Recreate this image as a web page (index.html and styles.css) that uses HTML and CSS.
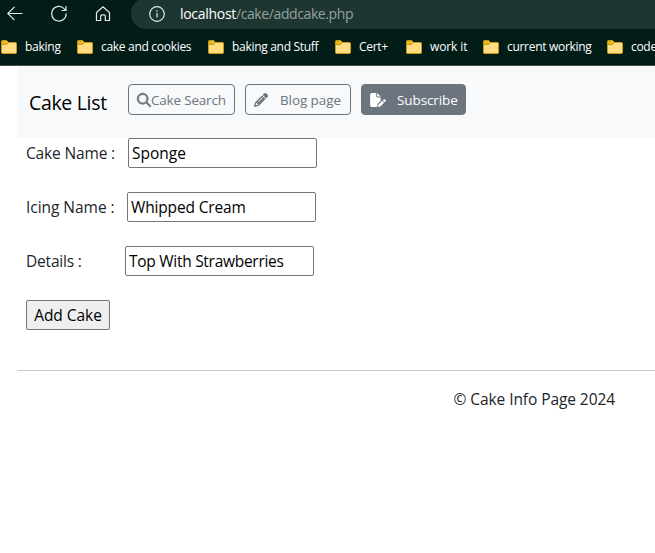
FILE: index.html
```html
<!DOCTYPE html>
<html lang="en">
<head>
<meta charset="utf-8">
<title>Cake List</title>
<link rel="stylesheet" href="styles.css">
</head>
<body>
<svg class="defs" width="0" height="0">
  <symbol id="folder" viewBox="0 0 16 14">
    <path d="M.5 1.5Q.5.5 1.5.5H5.5L7.5 2.5H14.5Q15.5 2.5 15.5 3.5V12.500Q15.500 13.500 14.500 13.500H1.500Q.500 13.500.500 12.500Z" fill="#ffdc82" stroke="#c99a10"/>
    <path d="M1 1H5.500L7 2.500 5.500 4H1Z" fill="#e5b61f"/>
    <path d="M.500 4.500H5.500L7.500 2.500" fill="none" stroke="#c99a10"/>
  </symbol>
</svg>
<header class="browser">
  <div class="toolbar">
    <div class="tools">
      <svg width="16" height="16" viewBox="0 0 16 16"><path d="M15.500 7.500H.800M7.500.800.800 7.500l6.700 6.700"/></svg>
      <svg width="18" height="18" viewBox="0 0 18 18"><path d="M16.200 8.500A7.300 7.300 0 1 1 14.300 3.800L16 5.500M16 1V5.500H11.500"/></svg>
      <svg width="16" height="18" viewBox="0 0 16 18"><path d="M1.500 7.500 8 1.700l6.500 5.800V15.500H10.300V11Q10.300 9.800 9 9.800H7Q5.700 9.800 5.700 11V15.500H1.500Z"/></svg>
    </div>
    <div class="address">
      <svg width="16" height="16" viewBox="0 0 16 16"><circle cx="8" cy="8" r="7.300"/><path d="M8 7v4.500M8 4.300v1.400"/></svg>
      <span class="url"><b>localhost</b>/cake/addcake.php</span>
    </div>
  </div>
  <nav class="bookmarks">
    <a class="bm w76"><svg><use href="#folder"/></svg><span>baking</span></a>
    <a class="bm w131"><svg><use href="#folder"/></svg><span>cake and cookies</span></a>
    <a class="bm w127"><svg><use href="#folder"/></svg><span>baking and Stuff</span></a>
    <a class="bm w71"><svg><use href="#folder"/></svg><span>Cert+</span></a>
    <a class="bm w77 wide"><svg><use href="#folder"/></svg><span>work it</span></a>
    <a class="bm w124"><svg><use href="#folder"/></svg><span>current working</span></a>
    <a class="bm"><svg><use href="#folder"/></svg><span>code</span></a>
  </nav>
</header>
<main class="page">
  <nav class="navbar">
    <span class="brand">Cake List</span>
    <a class="btn search"><svg width="14" height="14" viewBox="0 0 512 512"><path d="M416 208c0 45.900-14.900 88.300-40 122.700L502.600 457.400c12.500 12.500 12.500 32.800 0 45.300s-32.800 12.500-45.300 0L330.700 376c-34.400 25.200-76.800 40-122.700 40C93.100 416 0 322.900 0 208S93.100 0 208 0S416 93.100 416 208zM208 352a144 144 0 1 0 0-288 144 144 0 1 0 0 288z"/></svg><span>Cake Search</span></a>
    <a class="btn blog"><svg width="14" height="14" viewBox="0 0 512 512"><path d="M410.300 231l11.300-11.300-33.900-33.900-62.100-62.100L291.700 89.800l-11.300 11.300-22.600 22.600L58.600 322.900c-10.400 10.400-18 23.300-22.200 37.400L1 480.700c-2.500 8.400-.2 17.500 6.100 23.700s15.300 8.500 23.700 6.100l120.300-35.400c14.100-4.200 27-11.800 37.400-22.200L387.700 253.700 410.300 231zM160 399.400l-9.100 22.700c-4 3.100-8.500 5.400-13.300 6.900L59.400 452l23-78.100c1.400-4.900 3.800-9.400 6.900-13.300l22.700-9.100v32c0 8.800 7.200 16 16 16h32zM362.700 18.700L348.300 33.200 325.700 55.800 314.300 67.100l33.900 33.900 62.100 62.100 33.900 33.900 11.300-11.300 22.600-22.600 14.500-14.500c25-25 25-65.500 0-90.500L453.300 18.700c-25-25-65.500-25-90.500 0zm-47.400 168l-144 144c-6.200 6.200-16.400 6.200-22.600 0s-6.200-16.400 0-22.600l144-144c6.200-6.200 16.400-6.200 22.600 0s6.200 16.400 0 22.600z"/></svg><span>Blog page</span></a>
    <a class="btn subscribe"><svg width="16" height="14" viewBox="0 0 576 512"><path d="M0 64C0 28.700 28.700 0 64 0H224V128c0 17.700 14.300 32 32 32H384V285.700l-86.800 86.800c-10.300 10.300-17.500 23.100-21 37.200l-18.700 74.900c-2.300 9.200-1.800 18.800 1.300 27.500H64c-35.300 0-64-28.700-64-64V64zm384 64H256V0L384 128zM549.800 235.700l14.400 14.400c15.600 15.600 15.600 40.900 0 56.600l-29.400 29.400-71-71 29.400-29.400c15.600-15.600 40.900-15.600 56.600 0zM311.900 417L441.100 287.800l71 71L382.900 487.900c-4.100 4.100-9.200 7-14.900 8.400l-60.100 15c-5.500 1.400-11.200-.2-15.200-4.200s-5.600-9.700-4.200-15.200l15-60.100c1.400-5.600 4.300-10.800 8.400-14.900z"/></svg><span>Subscribe</span></a>
  </nav>
  <form class="form">
    <div class="row"><label class="l1">Cake Name :</label><input class="i1" value="Sponge"></div>
    <div class="row"><label class="l2">Icing Name :</label><input class="i2" value="Whipped Cream"></div>
    <div class="row"><label class="l3">Details :</label><input class="i3" value="Top With Strawberries"></div>
    <button type="button" class="add">Add Cake</button>
  </form>
  <footer class="footer"><span>© Cake Info Page 2024</span></footer>
</main>
</body>
</html>
```
FILE: styles.css
```css
* { box-sizing: border-box; }
body { margin: 0; height: 553px; overflow: hidden; background: #fff; color: #212529; font: 15.500px/24px "Open Sans", "Noto Sans", sans-serif; white-space: nowrap; }
svg { display: block; flex: none; }
.defs { position: absolute; }
.browser { height: 66px; background: #021d18; border-bottom: 1px solid #3d4f4b; overflow: hidden; }
.toolbar { display: flex; height: 29px; }
.tools { display: flex; width: 131px; padding: 0 20px 1px 7px; justify-content: space-between; align-items: center; }
.toolbar svg { fill: none; stroke: #e4e9e7; stroke-width: 1.200; }
.address { flex: 1; display: flex; align-items: center; gap: 15px; margin-top: -2px; padding-left: 18px; background: #1d3631; border-radius: 16px 0 0 16px; }
.url { padding-top: 1px; font-size: 14px; line-height: 20px; color: #96a09d; letter-spacing: -.400px; }
.url b { font-weight: 400; color: #fff; letter-spacing: -.300px; }
.bookmarks { display: flex; height: 36px; padding-left: 1px; align-items: center; color: #fff; font-size: 12px; line-height: 16px; letter-spacing: -.300px; }
.bm { display: flex; flex: none; align-items: center; gap: 8px; }
.bm svg { width: 16px; height: 14px; }
.wide { letter-spacing: -.120px; }
.w76 { width: 76px; letter-spacing: -.250px; }
.w131 { width: 131px; }
.w127 { width: 127px; }
.w71 { width: 71px; }
.w77 { width: 77px; }
.w124 { width: 124px; }
.page { margin-left: 17px; }
.navbar { display: flex; align-items: flex-start; gap: 10px; height: 72px; padding: 18px 0 0 12px; background: #f8f9fa; }
.brand { width: 89px; padding-top: 4px; font-size: 19.500px; line-height: 30px; color: #000; letter-spacing: -.330px; }
.btn { display: flex; align-items: center; height: 31px; padding-left: 8px; border: 1px solid #6c757d; border-radius: 4px; color: #6c757d; font-size: 13.500px; line-height: 20px; letter-spacing: -.100px; }
.btn svg { fill: currentColor; }
.search { width: 107px; letter-spacing: -.200px; }
.search svg { stroke: currentColor; stroke-width: 14; overflow: visible; }
.blog { width: 106px; gap: 12px; }
.subscribe { width: 105px; gap: 11px; background: #6c757d; color: #fff; }
.form { height: 232px; padding-left: 9px; display: flex; flex-direction: column; align-items: flex-start; gap: 24px; }
.row { display: flex; align-items: center; height: 30px; letter-spacing: -.150px; }
.l1 { width: 102px; }
.l2 { width: 101px; letter-spacing: -.040px; }
.l3 { width: 99px; letter-spacing: -.200px; }
input { width: 189px; height: 30px; margin: 0; padding: 1px 3px; border: 1px solid #767676; border-radius: 2px; background: #fff; color: #000; font: inherit; outline: none; }
.i1 { letter-spacing: 0; }
.i2 { letter-spacing: -.150px; }
.i3 { letter-spacing: -.280px; }
.add { width: 84px; height: 30px; padding: 0; border: 1px solid #767676; border-radius: 2px; background: #efefef; color: #000; font: inherit; letter-spacing: -.050px; }
.footer { border-top: 1px solid #c8c9ca; padding: 16px 40px 0 0; text-align: right; letter-spacing: -.080px; }
```
